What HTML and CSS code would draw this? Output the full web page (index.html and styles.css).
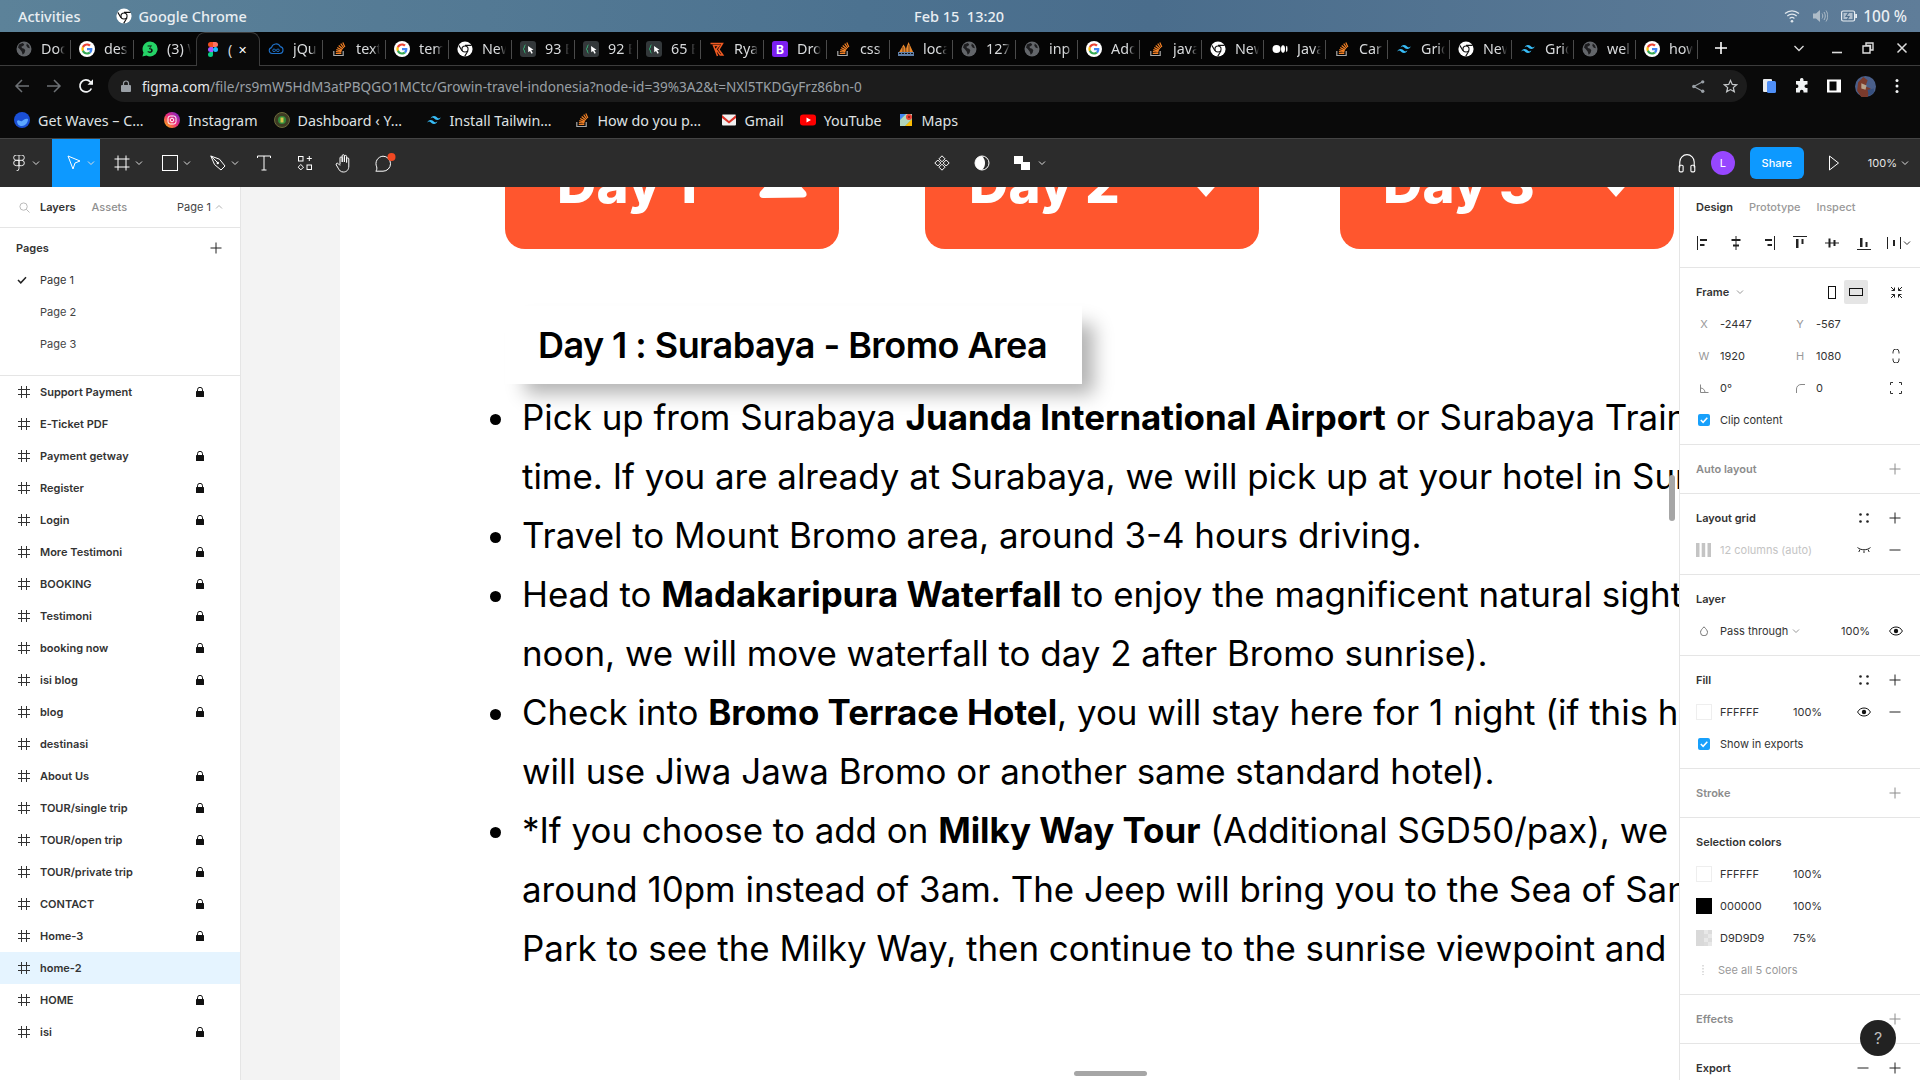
FILE: index.html
```html
<!DOCTYPE html>
<html lang="en">
<head>
<meta charset="utf-8">
<title>Growin travel indonesia – Figma</title>
<link rel="stylesheet" href="styles.css">
</head>
<body>
<svg class="defs" width="0" height="0" aria-hidden="true">
  <defs>
    <symbol id="i-globe" viewBox="0 0 16 16"><circle cx="8" cy="8" r="7.5" fill="#63666a"/><path d="M3 3.6 6.6 2l1.6 1.2-1 1.7-1.7.6.4 1.6 2.2.6 1.2 1.6-.8 2.6-1.8 1.9-.9-3L3.7 8 2 6.4zM10.8 2.6l2.2 2 .9 2.6-2.1-.5-1.5-1.9z" fill="#1d1d1f"/></symbol>
    <symbol id="i-g" viewBox="0 0 16 16"><circle cx="8" cy="8" r="8" fill="#fff"/><g transform="translate(2.4 2.4) scale(.2333)"><path fill="#EA4335" d="M24 9.5c3.54 0 6.71 1.22 9.21 3.6l6.85-6.85C35.9 2.38 30.47 0 24 0 14.62 0 6.51 5.38 2.56 13.22l7.98 6.19C12.43 13.72 17.74 9.5 24 9.5z"/><path fill="#4285F4" d="M46.98 24.55c0-1.57-.15-3.09-.38-4.55H24v9.02h12.94c-.58 2.96-2.26 5.48-4.78 7.18l7.73 6c4.51-4.18 7.09-10.36 7.09-17.65z"/><path fill="#FBBC05" d="M10.53 28.59c-.48-1.45-.76-2.99-.76-4.59s.27-3.14.76-4.59l-7.98-6.19C.92 16.46 0 20.12 0 24c0 3.88.92 7.54 2.56 10.78l7.97-6.19z"/><path fill="#34A853" d="M24 48c6.48 0 11.93-2.13 15.89-5.81l-7.73-6c-2.15 1.45-4.92 2.3-8.16 2.3-6.26 0-11.57-4.22-13.47-9.91l-7.98 6.19C6.51 42.62 14.62 48 24 48z"/></g></symbol>
    <symbol id="i-chrome" viewBox="0 0 16 16"><circle cx="8" cy="8" r="7.6" fill="#fff"/><path d="M8 4.4h6.6M5 9.8 1.8 4.4M11 9.8l-3.3 5.6" stroke="#111" stroke-width="1.1" fill="none"/><circle cx="8" cy="8" r="3.6" fill="#111"/><circle cx="8" cy="8" r="2.5" fill="#fff"/></symbol>
    <symbol id="i-wa" viewBox="0 0 16 16"><path d="M8 .4A7.5 7.5 0 0 0 1.5 11.6L.4 15.6l4.1-1.1A7.5 7.5 0 1 0 8 .4z" fill="#25d366"/><path d="M5.6 4.4h4.5L8 7.2c1.6 0 2.7.9 2.7 2.3 0 1.5-1.2 2.4-2.8 2.4-1 0-1.8-.3-2.5-.8l.6-1.1c.5.4 1.1.6 1.8.6.8 0 1.3-.4 1.3-1.1 0-.8-.6-1.2-2-1.2v-.9l1.6-1.9H5.6z" fill="#111"/></symbol>
    <symbol id="i-figma" viewBox="0 0 12 18"><path d="M3 18a3 3 0 0 0 3-3v-3H3a3 3 0 0 0 0 6z" fill="#0acf83"/><path d="M0 9a3 3 0 0 1 3-3h3v6H3a3 3 0 0 1-3-3z" fill="#a259ff"/><path d="M0 3a3 3 0 0 1 3-3h3v6H3a3 3 0 0 1-3-3z" fill="#f24e1e"/><path d="M6 0h3a3 3 0 0 1 0 6H6z" fill="#ff7262"/><circle cx="9" cy="9" r="3" fill="#1abcfe"/></symbol>
    <symbol id="i-jq" viewBox="0 0 16 16"><path d="M4 12.5a3 3 0 0 1-.5-5.900 4.600 4.600 0 0 1 8.700-1 3.500 3.500 0 0 1-.2 6.900z" fill="none" stroke="#1f6fc5" stroke-width="1.1"/><path d="M6 8a1.300 1.300 0 1 0 0 2.600c1.600 0 2.400-2.600 4-2.600a1.300 1.300 0 1 1 0 2.600C8.400 10.600 7.600 8 6 8z" fill="none" stroke="#1f6fc5" stroke-width=".9"/></symbol>
    <symbol id="i-so" viewBox="0 0 16 16"><path d="M2.800 10v4.500h9.400V10" fill="none" stroke="#a8a8a8" stroke-width="1.2"/><path d="M4.800 12.500h5.500M4.900 10.600l5.400.6M5.300 8.600l5.300 1.500M6.200 6.500l4.800 2.600M7.700 4.500l4.200 3.500M9.700 2.700l3.100 4.300M11.800 1.400l2 4.600" stroke="#f48024" stroke-width="1.2" fill="none"/></symbol>
    <symbol id="i-code" viewBox="0 0 16 16"><rect width="16" height="16" rx="3" fill="#33383a"/><path d="M5.500 4C3.800 4 5 7.500 3.200 8 5 8.500 3.800 12 5.500 12" stroke="#37b679" stroke-width="1" fill="none"/><path d="M8 5l5.500 3.800-2.300.5L12.800 12l-1.300.8-1.500-2.900-1.700 1.400z" fill="#fff"/></symbol>
    <symbol id="i-r" viewBox="0 0 16 16"><path d="M1.500 2.500h12L9.800 8.500l4 5.500h-2.600L7 8.300l3-3.800H4.500l4 10.500" fill="none" stroke="#f05a22" stroke-width="1.5"/></symbol>
    <symbol id="i-mtn" viewBox="0 0 16 16"><path d="M0 13 5.500 3.500 8 7.500 10.500 1 16 13z" fill="#e8862a"/><path d="M7.500 3.500 8 13M5 6v7M11 4v9" stroke="#111" stroke-width=".6"/><rect y="11" width="16" height="4" fill="#5f7fa8"/><path d="M1 12.500h14" stroke="#111" stroke-dasharray="2 1"/></symbol>
    <symbol id="i-tw" viewBox="0 0 24 24"><path fill="#38bdf8" d="M12 6c-2.670 0-4.330 1.330-5 4 1-1.330 2.170-1.830 3.500-1.500.76.19 1.310.74 1.910 1.350.98 1 2.120 2.150 4.590 2.150 2.670 0 4.330-1.330 5-4-1 1.330-2.170 1.830-3.500 1.500-.76-.19-1.310-.74-1.910-1.350C15.610 7.150 14.470 6 12 6zm-5 6c-2.670 0-4.330 1.330-5 4 1-1.330 2.170-1.830 3.500-1.500.76.19 1.310.74 1.910 1.350C8.390 16.850 9.530 18 12 18c2.670 0 4.330-1.330 5-4-1 1.330-2.170 1.830-3.500 1.500-.76-.19-1.310-.74-1.910-1.350C10.610 13.150 9.470 12 7 12z"/></symbol>
    <symbol id="i-med" viewBox="0 0 16 16"><circle cx="4.500" cy="8" r="4" fill="#fff"/><ellipse cx="11" cy="8" rx="2" ry="3.7" fill="#fff"/><ellipse cx="14.7" cy="8" rx=".8" ry="3.3" fill="#fff"/></symbol>
    <symbol id="i-hash" viewBox="0 0 12 12"><path d="M3.500 0v12M8.500 0v12M0 3.500h12M0 8.500h12" stroke="#333" fill="none"/></symbol>
    <symbol id="i-lock" viewBox="0 0 8 10"><path d="M1.500 4.200V2.800a2.500 2.500 0 0 1 5 0v1.400" fill="none" stroke="#111"/><rect y="4" width="8" height="6" rx=".6" fill="#111"/></symbol>
    <symbol id="i-plus" viewBox="0 0 12 12"><path d="M6 .5v11M.5 6h11" fill="none" stroke="currentColor"/></symbol>
    <symbol id="i-minus" viewBox="0 0 12 12"><path d="M.5 6h11" fill="none" stroke="currentColor"/></symbol>
    <symbol id="i-chev" viewBox="0 0 8 8"><path d="M1 2.500 4 5.500 7 2.500" fill="none" stroke="currentColor"/></symbol>
    <symbol id="i-dots" viewBox="0 0 12 12"><circle cx="2.500" cy="2.500" r="1.300"/><circle cx="9.500" cy="2.500" r="1.300"/><circle cx="2.500" cy="9.500" r="1.300"/><circle cx="9.500" cy="9.500" r="1.300"/></symbol>
    <symbol id="i-eye" viewBox="0 0 14 10"><path d="M.6 5C2 2.300 4.300 1 7 1s5 1.300 6.400 4C12 7.700 9.700 9 7 9S2 7.700.6 5z" fill="none" stroke="#111"/><circle cx="7" cy="5" r="2.2" fill="#111"/></symbol>
    <symbol id="i-check" viewBox="0 0 12 12"><rect width="12" height="12" rx="2" fill="#18a0fb"/><path d="M2.800 6l2.300 2.300 4.200-4.500" fill="none" stroke="#fff" stroke-width="1.5"/></symbol>
  </defs>
</svg>

<header class="status">
  <div class="status-left">
    <span>Activities</span>
    <span class="status-app"><svg class="ic16"><use href="#i-chrome"/></svg>Google Chrome</span>
  </div>
  <div class="status-clock">Feb 15&nbsp;&nbsp;13:20</div>
  <div class="status-right">
    <svg class="st-wifi" viewBox="0 0 16 14"><path d="M1 4.500c4-3.600 10-3.600 14 0M3.300 7c2.700-2.400 6.700-2.400 9.400 0M5.600 9.500c1.400-1.200 3.400-1.200 4.800 0" fill="none" stroke="#dfe6ec" stroke-width="1.2"/><circle cx="8" cy="12.300" r="1.300" fill="#dfe6ec"/></svg>
    <svg class="st-vol" viewBox="0 0 16 14"><path d="M1 4.500h3L8 1v12L4 9.500H1z" fill="#aebcc8"/><path d="M10 4.500c1 1.500 1 3.500 0 5M12 3c1.700 2.500 1.700 5.500 0 8M14 1.500c2.300 3.500 2.300 7.500 0 11" fill="none" stroke="#aebcc8"/></svg>
    <svg class="st-bat" viewBox="0 0 16 12"><rect x=".6" y="1" width="13" height="10" rx="1.5" fill="none" stroke="#e7edf2" stroke-width="1.2"/><rect x="14.2" y="4" width="1.8" height="4" fill="#e7edf2"/><path d="M2.500 3h9v6h-9z" fill="#e7edf2" opacity=".6"/><path d="M8 2 5 6.500h3L6 10" fill="none" stroke="#4f6f8c" stroke-width="1.2"/></svg>
    <span>100 %</span>
  </div>
</header>

<nav class="tabs">
  <div class="tab"><svg class="ic16"><use href="#i-globe"/></svg><span class="tab-title">Doc</span></div>
  <div class="tab"><svg class="ic16"><use href="#i-g"/></svg><span class="tab-title">desi</span></div>
  <div class="tab tab-pre"><svg class="ic16"><use href="#i-wa"/></svg><span class="tab-title">(3) W</span></div>
  <div class="tab tab-active"><svg class="ic-figma"><use href="#i-figma"/></svg><span class="tab-title tab-title-short">(</span><span class="tab-x">✕</span></div>
  <div class="tab"><svg class="ic16"><use href="#i-jq"/></svg><span class="tab-title">jQu</span></div>
  <div class="tab"><svg class="ic16"><use href="#i-so"/></svg><span class="tab-title">text</span></div>
  <div class="tab"><svg class="ic16"><use href="#i-g"/></svg><span class="tab-title">tem</span></div>
  <div class="tab"><svg class="ic16"><use href="#i-chrome"/></svg><span class="tab-title">New</span></div>
  <div class="tab"><svg class="ic16"><use href="#i-code"/></svg><span class="tab-title">93 E</span></div>
  <div class="tab"><svg class="ic16"><use href="#i-code"/></svg><span class="tab-title">92 E</span></div>
  <div class="tab"><svg class="ic16"><use href="#i-code"/></svg><span class="tab-title">65 E</span></div>
  <div class="tab"><svg class="ic16"><use href="#i-r"/></svg><span class="tab-title">Rya</span></div>
  <div class="tab"><svg class="ic16 ic-b" viewBox="0 0 16 16"><rect width="16" height="16" rx="2.5" fill="#7c1ff0"/><text x="8" y="12.500" text-anchor="middle" class="b-letter">B</text></svg><span class="tab-title">Dro</span></div>
  <div class="tab"><svg class="ic16"><use href="#i-so"/></svg><span class="tab-title">css</span></div>
  <div class="tab"><svg class="ic16"><use href="#i-mtn"/></svg><span class="tab-title">loca</span></div>
  <div class="tab"><svg class="ic16"><use href="#i-globe"/></svg><span class="tab-title">127.</span></div>
  <div class="tab tab-n"><svg class="ic16"><use href="#i-globe"/></svg><span class="tab-title">inp</span></div>
  <div class="tab tab-n"><svg class="ic16"><use href="#i-g"/></svg><span class="tab-title">Add</span></div>
  <div class="tab tab-n"><svg class="ic16"><use href="#i-so"/></svg><span class="tab-title">java</span></div>
  <div class="tab tab-n"><svg class="ic16"><use href="#i-chrome"/></svg><span class="tab-title">New</span></div>
  <div class="tab tab-n"><svg class="ic16"><use href="#i-med"/></svg><span class="tab-title">Java</span></div>
  <div class="tab tab-n"><svg class="ic16"><use href="#i-so"/></svg><span class="tab-title">Car</span></div>
  <div class="tab tab-n"><svg class="ic16"><use href="#i-tw"/></svg><span class="tab-title">Grid</span></div>
  <div class="tab tab-n"><svg class="ic16"><use href="#i-chrome"/></svg><span class="tab-title">New</span></div>
  <div class="tab tab-n"><svg class="ic16"><use href="#i-tw"/></svg><span class="tab-title">Grid</span></div>
  <div class="tab tab-n"><svg class="ic16"><use href="#i-globe"/></svg><span class="tab-title">wel</span></div>
  <div class="tab tab-n"><svg class="ic16"><use href="#i-g"/></svg><span class="tab-title">how</span></div>
  <svg class="tab-new" viewBox="0 0 12 12"><path d="M6 0v12M0 6h12" stroke="#fff" stroke-width="1.6" fill="none"/></svg>
  <div class="win-ctrls">
    <svg class="win-ic" viewBox="0 0 12 12"><path d="M1.500 4 6 8.500 10.500 4" stroke="#ddd" stroke-width="1.3" fill="none"/></svg>
    <svg class="win-ic" viewBox="0 0 12 12"><path d="M1 10.500h10" stroke="#ddd" stroke-width="1.6" fill="none"/></svg>
    <svg class="win-ic" viewBox="0 0 12 12"><path d="M4 1h7v7H8.500V3.500H4zM1 4h7v7H1z" fill="none" stroke="#ddd" stroke-width="1.4"/></svg>
    <svg class="win-ic" viewBox="0 0 12 12"><path d="M1.500 1.500l9 9M10.500 1.500l-9 9" stroke="#ddd" stroke-width="1.5" fill="none"/></svg>
  </div>
</nav>

<div class="addr">
  <svg class="nav-ic" viewBox="0 0 16 16"><path d="M15 8H2M8 2 2 8l6 6" stroke="#6d7175" stroke-width="1.5" fill="none"/></svg>
  <svg class="nav-ic" viewBox="0 0 16 16"><path d="M1 8h13M8 2l6 6-6 6" stroke="#6d7175" stroke-width="1.5" fill="none"/></svg>
  <svg class="nav-ic" viewBox="0 0 16 16"><path d="M13.400 10.500A6 6 0 1 1 12.300 3.800L14.500 6" stroke="#f1f3f4" stroke-width="1.7" fill="none"/><path d="M15 1.200v5.500H9.500z" fill="#f1f3f4"/></svg>
  <div class="omni">
    <svg class="omni-lock" viewBox="0 0 10 12"><path d="M2.500 5V3.500a2.500 2.500 0 0 1 5 0V5" fill="none" stroke="#9aa0a6" stroke-width="1.2"/><rect y="5" width="10" height="7" rx="1" fill="#9aa0a6"/></svg>
    <div class="omni-url"><b>figma.com</b>/file/rs9mW5HdM3atPBQGO1MCtc/Growin-travel-indonesia?node-id=39%3A2&amp;t=NXl5TKDGyFrz86bn-0</div>
    <svg class="omni-ic omni-share" viewBox="0 0 16 16"><circle cx="12.500" cy="3" r="1.800" fill="#9aa0a6"/><circle cx="12.500" cy="13" r="1.800" fill="#9aa0a6"/><circle cx="3" cy="8" r="1.800" fill="#9aa0a6"/><path d="M12.500 3 3 8l9.500 5" stroke="#9aa0a6" stroke-width="1.2" fill="none"/></svg>
    <svg class="omni-ic omni-star" viewBox="0 0 16 16"><path d="M8 1.500l1.900 4.300 4.600.4-3.500 3 1.100 4.500L8 11.300l-4.100 2.400L5 9.200l-3.500-3 4.600-.4z" fill="none" stroke="#c4c7c9" stroke-width="1.3"/></svg>
  </div>
  <div class="ext">
    <svg class="ext-ic" viewBox="0 0 16 16"><rect x="1" y="1" width="9" height="13" rx="1" fill="#e8eaed"/><rect x="5" y="3" width="9" height="12" rx="1.5" fill="#4f8ff7"/></svg>
    <svg class="ext-ic" viewBox="0 0 16 16"><path d="M6 1.500a1.800 1.800 0 0 1 3.500 0V3h4v3.500h-1.200a1.800 1.800 0 0 0 0 3.600h1.200v4.400H9.500v-1a1.800 1.800 0 0 0-3.600 0v1H2V10h1a1.800 1.800 0 0 0 0-3.500H2V3h4z" fill="#f1f3f4"/></svg>
    <svg class="ext-ic" viewBox="0 0 16 16"><path d="M1 1.500h14v13H1z" fill="#fff"/><rect x="3.500" y="3.500" width="7" height="9" fill="#0a0a0a"/></svg>
    <svg class="ext-av" viewBox="0 0 20 20"><circle cx="10" cy="10" r="10" fill="#4a5f8a"/><path d="M3 6 8 1l4 3-2 6 5 2-3 8H6L2 14z" fill="#7a3a2c"/><path d="M6 7l5 2-1 4-4-1z" fill="#b9a38c"/><path d="M12 13l6-1v4l-5 3z" fill="#37507f"/></svg>
    <svg class="ext-ic" viewBox="0 0 16 16"><circle cx="8" cy="2.500" r="1.500" fill="#f1f3f4"/><circle cx="8" cy="8" r="1.500" fill="#f1f3f4"/><circle cx="8" cy="13.500" r="1.500" fill="#f1f3f4"/></svg>
  </div>
</div>

<div class="bookmarks">
  <div class="bm"><svg class="ic16" viewBox="0 0 16 16"><circle cx="8" cy="8" r="8" fill="#1a4fd6"/><path d="M3 9c2-2 3 1 5 0s3-3 6-2c0 4-3 7-6 7s-5-2-5-5z" fill="#5ca7ff"/></svg><span class="bm-t1">Get Waves – C…</span></div>
  <div class="bm"><svg class="ic16" viewBox="0 0 16 16"><defs><linearGradient id="ig" x1="0" y1="1" x2="1" y2="0"><stop offset="0" stop-color="#fdc500"/><stop offset=".5" stop-color="#ee2a7b"/><stop offset="1" stop-color="#6228d7"/></linearGradient></defs><circle cx="8" cy="8" r="8" fill="url(#ig)"/><rect x="4" y="4" width="8" height="8" rx="2.2" fill="none" stroke="#fff"/><circle cx="8" cy="8" r="1.8" fill="none" stroke="#fff"/></svg><span>Instagram</span></div>
  <div class="bm"><svg class="ic16" viewBox="0 0 16 16"><circle cx="8" cy="8" r="7.5" fill="#3d3a22" stroke="#6b6a3c"/><circle cx="8" cy="8" r="4" fill="#2f8a3b"/><rect x="6.500" y="5.500" width="3" height="5" fill="#d8c24a"/></svg><span class="bm-t2">Dashboard ‹ Y…</span></div>
  <div class="bm"><svg class="ic16"><use href="#i-tw"/></svg><span class="bm-t3">Install Tailwin…</span></div>
  <div class="bm"><svg class="ic16"><use href="#i-so"/></svg><span class="bm-t4">How do you p…</span></div>
  <div class="bm"><svg class="ic16" viewBox="0 0 16 16"><rect x="1" y="2.500" width="14" height="11" rx="1" fill="#f1f1f1"/><path d="M1 3l7 6 7-6v3L8 11.500 1 6z" fill="#d93025"/></svg><span>Gmail</span></div>
  <div class="bm"><svg class="ic16" viewBox="0 0 16 16"><rect y="2.500" width="16" height="11" rx="3" fill="#f00"/><path d="M6.500 5.500 11 8l-4.500 2.500z" fill="#fff"/></svg><span>YouTube</span></div>
  <div class="bm"><svg class="ic16" viewBox="0 0 16 16"><path d="M2 2h12v12H2z" fill="#34a853"/><path d="M2 2h6L2 8z" fill="#4285f4"/><path d="M14 14H7l7-7z" fill="#fbbc04"/><path d="M8 2h6v5l-7 7H2V8z" fill="#e8eaed" opacity=".7"/><circle cx="11" cy="5" r="3" fill="#ea4335"/><circle cx="11" cy="5" r="1" fill="#7c1a12"/></svg><span>Maps</span></div>
</div>

<div class="toolbar">
  <div class="tb-left">
    <div class="tool tool-menu"><svg class="tool-ic" viewBox="0 0 12 18"><path d="M3 18a3 3 0 0 0 3-3V6H3a3 3 0 0 0 0 6h3M6 0H3a3 3 0 0 0 0 6h3V0h3a3 3 0 0 1 0 6H6v6h3a3 3 0 1 0 0-6" fill="none" stroke="#fff"/></svg><svg class="tool-chev"><use href="#i-chev"/></svg></div>
    <div class="tool tool-on"><svg class="tool-ic" viewBox="0 0 16 16"><path d="M2 1l12 5-5 2-2 6z" fill="none" stroke="#fff"/></svg><svg class="tool-chev"><use href="#i-chev"/></svg></div>
    <div class="tool"><svg class="tool-ic" viewBox="0 0 16 16"><path d="M4 .5v15M12 .5v15M.5 4h15M.5 12h15" fill="none" stroke="#fff"/></svg><svg class="tool-chev"><use href="#i-chev"/></svg></div>
    <div class="tool"><svg class="tool-ic" viewBox="0 0 16 16"><rect x=".5" y=".5" width="15" height="15" fill="none" stroke="#fff"/></svg><svg class="tool-chev"><use href="#i-chev"/></svg></div>
    <div class="tool"><svg class="tool-ic" viewBox="0 0 16 16"><path d="M.8 1 9.500 4.200 15 11 11 15 4.500 9.500z" fill="none" stroke="#fff"/><circle cx="7.800" cy="8" r="1.200" fill="#fff"/><path d="M.8 1 7 7" stroke="#fff"/></svg><svg class="tool-chev"><use href="#i-chev"/></svg></div>
    <div class="tool tool-plain tool-t"><svg class="tool-ic" viewBox="0 0 16 16"><path d="M1.500 3V1h13v2M8 1v14M5.500 15h5" fill="none" stroke="#fff"/></svg></div>
    <div class="tool tool-plain tool-b"><svg class="tool-ic" viewBox="0 0 16 16"><rect x="1.500" y="1.500" width="4.500" height="4.500" fill="none" stroke="#fff"/><rect x="10" y="10" width="4.500" height="4.500" fill="none" stroke="#fff"/><path d="M12.300 1v5M9.800 3.500h5" stroke="#fff" fill="none"/><path d="M3.800 9.500l2.700 2.700-2.700 2.700-2.700-2.700z" fill="none" stroke="#fff"/></svg></div>
    <div class="tool tool-plain tool-h"><svg class="tool-hand" viewBox="0 0 18 20"><path d="M5 11.500V5a1.100 1.100 0 0 1 2.200 0v4M7.200 9V2.800a1.100 1.100 0 0 1 2.200 0V9M9.400 9V3.500a1.100 1.100 0 0 1 2.200 0v6M11.600 9.500V6a1.100 1.100 0 0 1 2.200 0v7c0 4-2.300 6-5.300 6-3 0-4-1.500-5.300-3.800L1.300 12c-.8-1.400.9-2.500 2-1.300L5 12.500" fill="none" stroke="#fff"/></svg></div>
    <div class="tool tool-plain tool-c"><svg class="tool-cmt" viewBox="0 0 22 20"><path d="M9 3.200a7.500 7.500 0 0 1 0 15H1.800c1-1 1.300-2.800.9-4.300A7.500 7.500 0 0 1 9 3.200z" fill="none" stroke="#fff"/><circle cx="17.500" cy="4" r="4" fill="#f24822"/></svg></div>
  </div>
  <div class="tb-mid">
    <svg class="mid-ic" viewBox="0 0 16 16"><path d="M8 .8 11 3.800 8 6.800 5 3.800zM8 9.200l3 3-3 3-3-3zM3.800 5l3 3-3 3-3-3zM12.200 5l3 3-3 3-3-3z" fill="none" stroke="#fff"/></svg>
    <svg class="mid-ic" viewBox="0 0 16 16"><circle cx="8" cy="8" r="7" fill="none" stroke="#fff"/><path d="M8 1a7 7 0 0 0 0 14c2-2 3-4 3-7S10 3 8 1z" fill="#fff"/></svg>
    <svg class="mid-ic mid-multi" viewBox="0 0 16 16"><path d="M0 1h9v6h7v8H7V9H0z" fill="#fff"/></svg>
    <svg class="tool-chev"><use href="#i-chev"/></svg>
  </div>
  <div class="tb-right">
    <svg class="r-head" viewBox="0 0 16 18"><path d="M1.500 13V8a6.500 6.500 0 0 1 13 0v5" fill="none" stroke="#fff"/><rect x="1" y="11" width="3.500" height="6" rx="1" fill="none" stroke="#fff"/><rect x="11.500" y="11" width="3.500" height="6" rx="1" fill="none" stroke="#fff"/></svg>
    <div class="avatar">L</div>
    <div class="share">Share</div>
    <svg class="r-play" viewBox="0 0 12 16"><path d="M1.500 1 10.500 8l-9 7z" fill="none" stroke="#fff"/></svg>
    <div class="zoomv">100%</div>
    <svg class="tool-chev"><use href="#i-chev"/></svg>
  </div>
</div>

<main class="main">
  <aside class="left">
    <div class="left-head">
      <svg class="search" viewBox="0 0 12 12"><circle cx="5" cy="5" r="4" fill="none" stroke="#b3b3b3"/><path d="M8 8l3.500 3.500" stroke="#b3b3b3"/></svg>
      <span class="lh-on">Layers</span>
      <span class="lh-off">Assets</span>
      <span class="lh-page">Page 1</span>
      <svg class="lh-chev" viewBox="0 0 8 8"><path d="M1 5.500 4 2.500 7 5.500" fill="none" stroke="#b3b3b3"/></svg>
    </div>
    <section class="pages">
      <div class="pages-title"><span>Pages</span><svg class="plus"><use href="#i-plus"/></svg></div>
      <div class="page-row"><svg class="page-check" viewBox="0 0 10 8"><path d="M1 4l2.800 2.800L9 1.200" fill="none" stroke="#222" stroke-width="1.5"/></svg>Page 1</div>
      <div class="page-row page-dim">Page 2</div>
      <div class="page-row page-dim">Page 3</div>
    </section>
    <section class="layers">
      <div class="layer"><svg class="hash"><use href="#i-hash"/></svg><span>Support Payment</span><svg class="lock"><use href="#i-lock"/></svg></div>
      <div class="layer"><svg class="hash"><use href="#i-hash"/></svg><span>E-Ticket PDF</span></div>
      <div class="layer"><svg class="hash"><use href="#i-hash"/></svg><span>Payment getway</span><svg class="lock"><use href="#i-lock"/></svg></div>
      <div class="layer"><svg class="hash"><use href="#i-hash"/></svg><span>Register</span><svg class="lock"><use href="#i-lock"/></svg></div>
      <div class="layer"><svg class="hash"><use href="#i-hash"/></svg><span>Login</span><svg class="lock"><use href="#i-lock"/></svg></div>
      <div class="layer"><svg class="hash"><use href="#i-hash"/></svg><span>More Testimoni</span><svg class="lock"><use href="#i-lock"/></svg></div>
      <div class="layer"><svg class="hash"><use href="#i-hash"/></svg><span>BOOKING</span><svg class="lock"><use href="#i-lock"/></svg></div>
      <div class="layer"><svg class="hash"><use href="#i-hash"/></svg><span>Testimoni</span><svg class="lock"><use href="#i-lock"/></svg></div>
      <div class="layer"><svg class="hash"><use href="#i-hash"/></svg><span>booking now</span><svg class="lock"><use href="#i-lock"/></svg></div>
      <div class="layer"><svg class="hash"><use href="#i-hash"/></svg><span>isi blog</span><svg class="lock"><use href="#i-lock"/></svg></div>
      <div class="layer"><svg class="hash"><use href="#i-hash"/></svg><span>blog</span><svg class="lock"><use href="#i-lock"/></svg></div>
      <div class="layer"><svg class="hash"><use href="#i-hash"/></svg><span>destinasi</span></div>
      <div class="layer"><svg class="hash"><use href="#i-hash"/></svg><span>About Us</span><svg class="lock"><use href="#i-lock"/></svg></div>
      <div class="layer"><svg class="hash"><use href="#i-hash"/></svg><span>TOUR/single trip</span><svg class="lock"><use href="#i-lock"/></svg></div>
      <div class="layer"><svg class="hash"><use href="#i-hash"/></svg><span>TOUR/open trip</span><svg class="lock"><use href="#i-lock"/></svg></div>
      <div class="layer"><svg class="hash"><use href="#i-hash"/></svg><span>TOUR/private trip</span><svg class="lock"><use href="#i-lock"/></svg></div>
      <div class="layer"><svg class="hash"><use href="#i-hash"/></svg><span>CONTACT</span><svg class="lock"><use href="#i-lock"/></svg></div>
      <div class="layer"><svg class="hash"><use href="#i-hash"/></svg><span>Home-3</span><svg class="lock"><use href="#i-lock"/></svg></div>
      <div class="layer layer-sel"><svg class="hash"><use href="#i-hash"/></svg><span>home-2</span></div>
      <div class="layer"><svg class="hash"><use href="#i-hash"/></svg><span>HOME</span><svg class="lock"><use href="#i-lock"/></svg></div>
      <div class="layer"><svg class="hash"><use href="#i-hash"/></svg><span>isi</span><svg class="lock"><use href="#i-lock"/></svg></div>
    </section>
  </aside>

  <div class="canvas">
    <div class="gutter"></div>
    <div class="frame">
      <div class="cards">
        <div class="card card-1"><span>Day 1</span><svg class="caret caret-up" viewBox="0 0 48 32"><path d="M24 0 47 26q2 5-3 5.500L4 32q-5-.5-3-6z" fill="#fff"/></svg></div>
        <div class="card card-2"><span>Day 2</span><svg class="caret" viewBox="0 0 48 32"><path d="M24 32 47 6q2-5-3-5.500L4 0q-5 .5-3 6z" fill="#fff"/></svg></div>
        <div class="card card-3"><span>Day 3</span><svg class="caret" viewBox="0 0 48 32"><path d="M24 32 47 6q2-5-3-5.500L4 0q-5 .5-3 6z" fill="#fff"/></svg></div>
      </div>
      <h1 class="day-title">Day 1 : Surabaya - Bromo Area</h1>
      <ul class="itinerary">
        <li>Pick up from Surabaya <b>Juanda International Airport</b> or Surabaya Train<br>time. If you are already at Surabaya, we will pick up at your hotel in Sur</li>
        <li>Travel to Mount Bromo area, around 3-4 hours driving.</li>
        <li>Head to <b>Madakaripura Waterfall</b> to enjoy the magnificent natural sight<br>noon, we will move waterfall to day 2 after Bromo sunrise).</li>
        <li>Check into <b>Bromo Terrace Hotel</b>, you will stay here for 1 night (if this h<br>will use Jiwa Jawa Bromo or another same standard hotel).</li>
        <li>*If you choose to add on <b>Milky Way Tour</b> (Additional SGD50/pax), we<br>around 10pm instead of 3am. The Jeep will bring you to the Sea of San<br>Park to see the Milky Way, then continue to the sunrise viewpoint and</li>
      </ul>
    </div>
    <div class="scroll-v"></div>
    <div class="scroll-h"></div>
  </div>

  <aside class="right">
    <div class="r-tabs"><span class="rt-on">Design</span><span>Prototype</span><span>Inspect</span></div>
    <section class="r-align">
      <svg class="al" viewBox="0 0 14 14"><path d="M.5 0v14" stroke="#222"/><path d="M3 3h7v2H3zM3 8h4.500v2H3z" fill="#222"/></svg>
      <svg class="al" viewBox="0 0 14 14"><path d="M7 0v14" stroke="#222"/><path d="M2.500 3h9v2h-9zM4 8.500h6v2H4z" fill="#222"/></svg>
      <svg class="al" viewBox="0 0 14 14"><path d="M13.500 0v14" stroke="#222"/><path d="M4 3h7v2H4zM6.500 8H11v2H6.500z" fill="#222"/></svg>
      <svg class="al" viewBox="0 0 14 14"><path d="M0 .5h14" stroke="#222"/><path d="M3 3h2.500v9H3zM8.500 3h2v5h-2z" fill="#222"/></svg>
      <svg class="al" viewBox="0 0 14 14"><path d="M0 7h14" stroke="#222"/><path d="M3.500 2.500h2v9h-2zM8.500 4h2v6h-2z" fill="#222"/></svg>
      <svg class="al" viewBox="0 0 14 14"><path d="M0 13.500h14" stroke="#222"/><path d="M3 2h2.500v9H3zM8.500 6h2v5h-2z" fill="#222"/></svg>
      <svg class="al al-last" viewBox="0 0 14 14"><path d="M.5 1v12M13.500 1v12" stroke="#222"/><path d="M6 4h2v6H6z" fill="#222"/></svg>
      <svg class="al-chev"><use href="#i-chev"/></svg>
    </section>

    <section class="sec">
      <div class="row-title">
        <span class="t">Frame</span><svg class="f-chev"><use href="#i-chev"/></svg>
        <svg class="f-port" viewBox="0 0 8 13"><rect x=".5" y=".5" width="7" height="12" fill="none" stroke="#111"/></svg>
        <div class="f-sel"><svg class="f-land" viewBox="0 0 14 8"><rect x=".5" y=".5" width="13" height="7" fill="none" stroke="#111"/></svg></div>
        <svg class="f-res" viewBox="0 0 13 13"><path d="M1 1l3.500 3.500M4.500 1.500v3h-3M12 1 8.500 4.500M8.500 1.500v3h3M1 12l3.500-3.500M4.500 11.500v-3h-3M12 12 8.500 8.500M8.500 11.500v-3h3" fill="none" stroke="#222"/></svg>
      </div>
      <div class="fields"><span class="lb">X</span><span class="val">-2447</span><span class="lb">Y</span><span class="val">-567</span></div>
      <div class="fields"><span class="lb">W</span><span class="val">1920</span><span class="lb">H</span><span class="val">1080</span><svg class="fi" viewBox="0 0 8 14"><path d="M1 4.500V3a3 3 0 0 1 6 0v1.500M1 9.500V11a3 3 0 0 0 6 0V9.500" fill="none" stroke="#333"/></svg></div>
      <div class="fields"><span class="lb"><svg class="lb-ic" viewBox="0 0 9 9"><path d="M.5.5v8h8M.5 4a4.500 4.500 0 0 1 4.500 4.500" fill="none" stroke="#888"/></svg></span><span class="val">0°</span><span class="lb"><svg class="lb-ic" viewBox="0 0 9 9"><path d="M.5 9V5A4.500 4.500 0 0 1 5 .5h4" fill="none" stroke="#888"/></svg></span><span class="val">0</span><svg class="fi fi-w" viewBox="0 0 12 12"><path d="M.5 3V.5H3M9 .5h2.500V3M11.500 9v2.500H9M3 11.500H.5V9" fill="none" stroke="#333"/></svg></div>
      <div class="chk-row"><svg class="chk"><use href="#i-check"/></svg>Clip content</div>
    </section>

    <section class="sec"><div class="row-title row-dim"><span class="t">Auto layout</span><svg class="r-plus"><use href="#i-plus"/></svg></div></section>

    <section class="sec">
      <div class="row-title"><span class="t">Layout grid</span><svg class="r-dots"><use href="#i-dots"/></svg><svg class="r-plus r-plus-n"><use href="#i-plus"/></svg></div>
      <div class="row">
        <svg class="grid-ic" viewBox="0 0 15 14"><path d="M0 0h3.500v14H0zM5.700 0h3.500v14H5.700zM11.500 0H15v14h-3.500z" fill="#c4c4c4"/></svg>
        <span class="grid-txt">12 columns (auto)</span>
        <svg class="eye-off" viewBox="0 0 14 8"><path d="M.5 1.500c3.500 3 9.500 3 13 0M3 3.500 1.800 6M7 4.500V7M11 3.500 12.200 6" fill="none" stroke="#222"/></svg>
        <svg class="r-minus"><use href="#i-minus"/></svg>
      </div>
    </section>

    <section class="sec">
      <div class="row-title"><span class="t">Layer</span></div>
      <div class="row">
        <svg class="drop" viewBox="0 0 8 10"><path d="M4 .8C6 3 7.500 4.500 7.500 6.300a3.500 3.500 0 0 1-7 0C.5 4.500 2 3 4 .8z" fill="none" stroke="#777"/></svg>
        <span class="val">Pass through</span><svg class="p-chev"><use href="#i-chev"/></svg>
        <span class="pct pct-layer">100%</span>
        <svg class="eye eye-end"><use href="#i-eye"/></svg>
      </div>
    </section>

    <section class="sec">
      <div class="row-title"><span class="t">Fill</span><svg class="r-dots"><use href="#i-dots"/></svg><svg class="r-plus r-plus-n"><use href="#i-plus"/></svg></div>
      <div class="row"><span class="sw sw-w"></span><span class="val hex">FFFFFF</span><span class="pct">100%</span><svg class="eye eye-mid"><use href="#i-eye"/></svg><svg class="r-minus"><use href="#i-minus"/></svg></div>
      <div class="chk-row"><svg class="chk"><use href="#i-check"/></svg>Show in exports</div>
    </section>

    <section class="sec"><div class="row-title row-dim"><span class="t">Stroke</span><svg class="r-plus"><use href="#i-plus"/></svg></div></section>

    <section class="sec">
      <div class="row-title"><span class="t">Selection colors</span></div>
      <div class="row"><span class="sw sw-w"></span><span class="val hex">FFFFFF</span><span class="pct">100%</span></div>
      <div class="row"><span class="sw sw-k"></span><span class="val hex">000000</span><span class="pct">100%</span></div>
      <div class="row"><span class="sw sw-g"></span><span class="val hex">D9D9D9</span><span class="pct">75%</span></div>
      <div class="row row-see"><svg class="see-ic" viewBox="0 0 2 10"><path d="M1 0v10" stroke="#bbb" stroke-dasharray="1.500 1.500" fill="none"/></svg><span>See all 5 colors</span></div>
    </section>

    <section class="sec"><div class="row-title row-dim"><span class="t">Effects</span><svg class="r-plus"><use href="#i-plus"/></svg></div></section>

    <section class="sec sec-last"><div class="row-title"><span class="t">Export</span><svg class="r-minus r-minus-t"><use href="#i-minus"/></svg><svg class="r-plus r-plus-n"><use href="#i-plus"/></svg></div></section>
    <div class="help">?</div>
  </aside>
</main>
</body>
</html>
```

FILE: styles.css
```css
* { box-sizing: border-box; }
html, body { margin: 0; padding: 0; height: 100%; overflow: hidden; }
body { width: 1920px; height: 1080px; display: flex; flex-direction: column; background: #000; font-family: Inter, "Noto Sans", sans-serif; }
svg { display: block; flex: none; }
.defs { position: absolute; }
.ic16 { width: 16px; height: 16px; }

/* GNOME bar */
.status { height: 32px; flex: none; display: flex; align-items: center; padding: 0 12px 0 18px; position: relative; background: linear-gradient(90deg, #5c8299 0%, #4c7290 45%, #4a6d8c 60%, #5f7d99 100%); color: #e9eef2; font: 500 14.5px "Noto Sans", sans-serif; }
.status-left { display: flex; align-items: center; gap: 36px; }
.status-app { display: flex; align-items: center; gap: 6px; }
.status-clock { position: absolute; left: 914px; top: 0; line-height: 32px; }
.status-right { margin-left: auto; display: flex; align-items: center; gap: 6px; font-size: 15.5px; padding-right: 1px; }
.st-wifi { width: 16px; height: 14px; margin-right: 6px; }
.st-vol { width: 16px; height: 14px; margin-right: 7px; }
.st-bat { width: 16px; height: 12px; }

/* Tabs */
.tabs { height: 34px; flex: none; display: flex; background: #050505; border-bottom: 1px solid #3c3c3c; padding-left: 8px; position: relative; font: 400 14.3px "Noto Sans", sans-serif; color: #d8dadc; }
.tab { width: 63px; height: 33px; flex: none; display: flex; align-items: center; padding-left: 8px; position: relative; }
.tab-n { width: 62px; }
.tab::after { content: ""; position: absolute; right: 0; top: 8px; height: 19px; width: 1px; background: #4a4a4a; }
.tab-pre::after { display: none; }
.tab-title { width: 24px; margin-left: 9px; overflow: hidden; white-space: nowrap; -webkit-mask-image: linear-gradient(90deg, #000 70%, transparent); mask-image: linear-gradient(90deg, #000 70%, transparent); }
.tab-active { height: 34px; background: #0a0a0a; border: 1px solid #3c3c3c; border-bottom: 0; border-radius: 9px 9px 0 0; padding-left: 10px; z-index: 1; width: 64px; margin-left: -1px; }
.tab-active::after { display: none; }
.ic-figma { width: 10px; height: 15px; margin: 0 4px 0 1px; }
.tab-title-short { width: 8px; margin-left: 6px; -webkit-mask-image: none; mask-image: none; }
.tab-x { margin-left: 2px; font-size: 11px; color: #fff; }
.b-letter { font: 700 12px Inter, sans-serif; fill: #fff; }
.tab-new { width: 12px; height: 12px; margin: 10px 0 0 17px; }
.win-ctrls { position: absolute; right: 12px; top: 10px; display: flex; }
.win-ic { width: 12px; height: 12px; }
.win-ic:nth-child(2) { margin-left: 26px; }
.win-ic:nth-child(3) { margin-left: 19px; }
.win-ic:nth-child(4) { margin-left: 22px; }

/* Address */
.addr { height: 36px; flex: none; display: flex; align-items: flex-start; padding: 4px 0 0 14px; background: #0a0a0a; }
.nav-ic { width: 16px; height: 16px; margin: 8px 16px 0 0; }
.omni { width: 1639px; height: 32px; margin-left: -2px; border-radius: 16px; background: #1c1c1c; display: flex; align-items: center; padding-left: 13px; color: #9aa0a6; }
.omni-lock { width: 10px; height: 12px; }
.omni-url { margin-left: 11px; font: 400 13.6px "Noto Sans", sans-serif; white-space: nowrap; }
.omni-url b { font-weight: 400; color: #e8eaed; }
.omni-ic { width: 15px; height: 15px; }
.omni-share { margin-left: auto; margin-right: 17px; }
.omni-star { margin-right: 9px; }
.ext { display: flex; align-items: center; height: 32px; gap: 16px; margin-left: 15px; }
.ext-ic { width: 16px; height: 16px; }
.ext-av { width: 21px; height: 21px; margin: 0 -3px; }

/* Bookmarks */
.bookmarks { height: 36px; flex: none; display: flex; align-items: center; gap: 16px; padding-left: 14px; background: #0a0a0a; color: #dfe1e3; font: 400 14.3px "Noto Sans", sans-serif; white-space: nowrap; }
.bm { display: flex; align-items: center; gap: 8px; }
.bm-t1 { width: 110px; }
.bm-t2 { width: 112px; }
.bm-t3 { width: 108px; }
.bm-t4 { width: 107px; }

/* Figma toolbar */
.toolbar { height: 49px; flex: none; display: flex; align-items: center; justify-content: space-between; background: #2c2c2c; border-top: 1px solid #444; position: relative; color: #fff; }
.tb-left { display: flex; height: 48px; }
.tool { width: 48px; height: 48px; display: flex; align-items: center; padding-left: 14px; gap: 5px; }
.tool-menu { width: 52px; padding-left: 11px; }
.tool-on { background: #0d99ff; }
.tool-plain { justify-content: center; padding-left: 0; }
.tool-t { width: 40px; }
.tool-b { width: 42px; }
.tool-h { width: 36px; }
.tool-c { width: 43px; }
.tool-ic { width: 16px; height: 16px; }
.tool-hand { width: 18px; height: 20px; }
.tool-cmt { width: 22px; height: 20px; margin-left: 2px; }
.tool-chev { width: 8px; height: 8px; color: #ddd; }
.tb-mid { position: absolute; left: 934px; top: 0; height: 48px; display: flex; align-items: center; gap: 24px; }
.mid-ic { width: 16px; height: 16px; }
.tb-mid .tool-chev { margin-left: -16px; }
.tb-right { display: flex; align-items: center; padding-right: 11px; }
.r-head { width: 18px; height: 20px; margin-right: 15px; }
.avatar { width: 24px; height: 24px; border-radius: 50%; background: #9747ff; font-size: 11px; text-align: center; line-height: 24px; margin-right: 15px; }
.share { width: 54px; height: 32px; border-radius: 6px; background: #0d99ff; font: 500 11px/32px Inter, sans-serif; text-align: center; margin-right: 24px; }
.r-play { width: 12px; height: 16px; margin-right: 28px; }
.zoomv { font-size: 11px; margin-right: 4px; color: #e6e6e6; }

/* Main */
.main { flex: 1; min-height: 0; display: flex; background: #fff; }
.left { width: 241px; flex: none; border-right: 1px solid #e5e5e5; font-size: 11px; color: #333; overflow: hidden; }
.left-head { height: 41px; display: flex; align-items: center; padding-left: 19px; border-bottom: 1px solid #e5e5e5; }
.search { width: 11px; height: 11px; margin-right: 10px; }
.lh-on { font-weight: 600; }
.lh-off { color: #8f8f8f; margin-left: 16px; font-weight: 500; }
.lh-page { margin-left: auto; color: #444; }
.lh-chev { width: 8px; height: 8px; margin: 0 17px 0 4px; }
.pages { border-bottom: 1px solid #e5e5e5; padding: 4px 0 15px; }
.pages-title { height: 32px; display: flex; align-items: center; justify-content: space-between; padding: 0 18px 0 16px; font-weight: 600; }
.plus { width: 12px; height: 12px; color: #222; }
.page-row { height: 32px; padding-left: 40px; display: flex; align-items: center; position: relative; }
.page-dim { color: #444; }
.page-check { width: 10px; height: 8px; position: absolute; left: 17px; top: 12px; }
.layer { height: 32px; display: flex; align-items: center; padding-left: 18px; font-weight: 600; position: relative; white-space: nowrap; }
.layer-sel { background: #e5f4ff; }
.hash { width: 12px; height: 12px; margin-right: 10px; }
.lock { width: 8px; height: 10px; margin-left: auto; margin-right: 36px; }

/* Canvas */
.canvas { flex: 1; min-width: 0; display: flex; position: relative; overflow: hidden; }
.gutter { width: 99px; flex: none; background: #f3f3f3; }
.frame { flex: 1; min-width: 0; background: #fff; padding-left: 165px; color: #000; }
.cards { display: flex; height: 62px; }
.card { flex: none; width: 334px; height: 110px; margin-top: -48px; padding: 0 32px 34px 52px; display: flex; align-items: flex-end; justify-content: space-between; background: #ff562e; border-radius: 0 0 20px 20px; color: #fff; font: 800 54.5px/64px Inter, sans-serif; white-space: nowrap; }
.card-2 { margin-left: 86px; padding-left: 44px; padding-right: 29px; }
.card-3 { margin-left: 81px; padding-left: 43px; padding-right: 34px; }
.caret { width: 48px; height: 32px; margin-bottom: 18px; }
.caret-up { margin-bottom: 17px; }
.day-title { width: 577px; height: 78px; margin: 57px 0 0; padding-left: 33px; background: #fff; box-shadow: 16px 14px 18px -4px rgba(0,0,0,.3); font: 600 36px/78px Inter, sans-serif; white-space: nowrap; letter-spacing: -.55px; }
.itinerary { margin: 4px 0 0 -165px; padding: 0 0 0 179px; list-style: disc; font: 400 34.9px/59px Inter, sans-serif; white-space: nowrap; }
.itinerary li { padding-left: 3px; }
.itinerary b { font-weight: 700; }
.scroll-v { position: absolute; left: 1428px; top: 288px; width: 6px; height: 46px; border-radius: 3px; background: #a6a6a6; }
.scroll-h { position: absolute; left: 833px; top: 884px; width: 73px; height: 5px; border-radius: 3px; background: #a6a6a6; }

/* Right panel */
.right { width: 241px; flex: none; border-left: 1px solid #e5e5e5; font-size: 11px; color: #333; position: relative; overflow: hidden; background: #fff; }
.r-tabs { height: 40px; display: flex; align-items: center; gap: 16px; padding-left: 16px; color: #999; font-weight: 500; }
.rt-on { color: #333; font-weight: 600; }
.r-align { height: 41px; padding: 0 0 9px 8px; border-bottom: 1px solid #e5e5e5; display: flex; align-items: center; }
.al { width: 14px; height: 14px; margin: 0 9px; }
.al-last { margin: 0 2px 0 7px; }
.al-chev { width: 8px; height: 8px; color: #333; }
.sec { padding: 8px 0; border-bottom: 1px solid #e5e5e5; }
.sec-last { border-bottom: 0; }
.row-title { height: 32px; padding-left: 16px; display: flex; align-items: center; position: relative; }
.t { font-weight: 600; color: #333; }
.row-dim .t { color: #8c8c8c; }
.f-chev { width: 8px; height: 8px; margin-left: 7px; color: #999; }
.f-port { width: 8px; height: 13px; position: absolute; left: 148px; top: 10px; }
.f-sel { position: absolute; left: 164px; top: 4px; width: 24px; height: 24px; border-radius: 2px; background: #e5e5e5; display: flex; align-items: center; justify-content: center; }
.f-land { width: 14px; height: 8px; }
.f-res { width: 13px; height: 13px; position: absolute; left: 210px; top: 10px; }
.r-plus { width: 12px; height: 12px; margin-left: auto; margin-right: 19px; color: #8c8c8c; }
.r-plus-n { margin: 0; color: #222; position: absolute; left: 209px; top: 10px; }
.r-dots { width: 12px; height: 12px; fill: #222; position: absolute; left: 178px; top: 10px; }
.r-minus { width: 12px; height: 12px; color: #222; position: absolute; left: 209px; top: 10px; }
.r-minus-t { left: 177px; }
.fields { height: 32px; display: grid; grid-template-columns: 16px 80px 16px 72px 32px; align-items: center; padding-left: 16px; }
.lb { color: #999; display: flex; justify-content: center; }
.lb-ic { width: 9px; height: 9px; }
.val { padding-left: 8px; color: #333; }
.fi { width: 8px; height: 14px; justify-self: center; }
.fi-w { width: 12px; height: 12px; }
.chk-row { height: 32px; display: flex; align-items: center; padding-left: 18px; gap: 10px; color: #333; }
.chk { width: 12px; height: 12px; }
.row { height: 32px; display: flex; align-items: center; padding-left: 16px; position: relative; }
.grid-ic { width: 15px; height: 14px; }
.grid-txt { margin-left: 9px; color: #c4c4c4; }
.eye-off { width: 14px; height: 8px; position: absolute; left: 177px; top: 12px; }
.drop { width: 8px; height: 10px; margin: 0 4px; }
.p-chev { width: 8px; height: 8px; margin-left: 4px; color: #999; }
.pct { position: absolute; left: 113px; }
.pct-layer { left: 161px; }
.eye { width: 14px; height: 10px; position: absolute; top: 11px; }
.eye-end { left: 209px; }
.eye-mid { left: 177px; }
.sw { width: 16px; height: 16px; flex: none; }
.sw-w { background: #fff; border: 1px solid #eee; }
.sw-k { background: #000; }
.sw-g { background: linear-gradient(90deg, #d9d9d9 50%, transparent 50%), repeating-conic-gradient(#dcdcdc 0 25%, #e8e8e8 0 50%) 0 0 / 8px 8px; }
.hex { width: 64px; }
.row-see { color: #999; }
.see-ic { width: 2px; height: 10px; margin: 0 14px 0 6px; }
.help { position: absolute; left: 180px; top: 833px; width: 36px; height: 36px; border-radius: 50%; background: #222; color: #bbb; font-size: 16px; text-align: center; line-height: 36px; }
```
